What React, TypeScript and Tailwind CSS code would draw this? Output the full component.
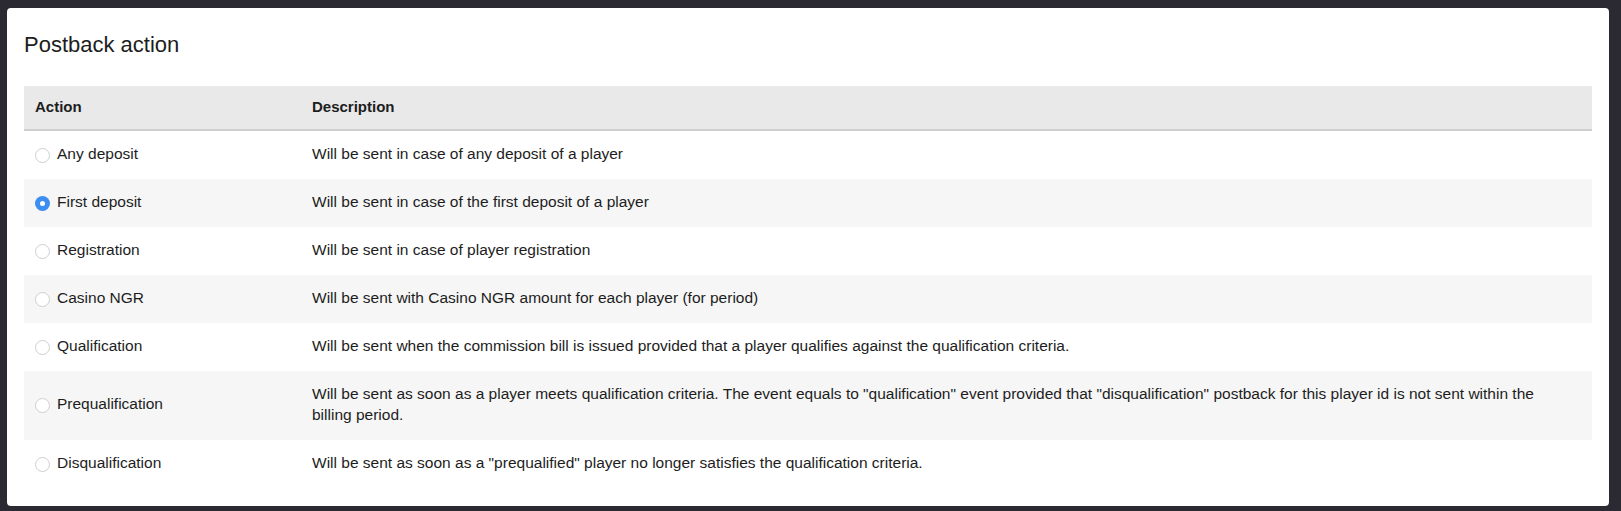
import React from "react";

const rows = [
  { action: "Any deposit", desc: "Will be sent in case of any deposit of a player", checked: false },
  { action: "First deposit", desc: "Will be sent in case of the first deposit of a player", checked: true },
  { action: "Registration", desc: "Will be sent in case of player registration", checked: false },
  { action: "Casino NGR", desc: "Will be sent with Casino NGR amount for each player (for period)", checked: false },
  { action: "Qualification", desc: "Will be sent when the commission bill is issued provided that a player qualifies against the qualification criteria.", checked: false },
  {
    action: "Prequalification",
    desc: (
      <>
        Will be sent as soon as a player meets qualification criteria. The event equals to "qualification" event provided that "disqualification" postback for this player id is not sent within the
        <br />
        billing period.
      </>
    ),
    checked: false,
  },
  { action: "Disqualification", desc: 'Will be sent as soon as a "prequalified" player no longer satisfies the qualification criteria.', checked: false },
];

function Radio({ checked }: { checked: boolean }) {
  if (checked) {
    return (
      <span className="flex h-[15px] w-[15px] shrink-0 items-center justify-center rounded-full bg-[#3d8ef2]">
        <span className="h-[5px] w-[5px] rounded-full bg-white" />
      </span>
    );
  }
  return <span className="h-[15px] w-[15px] shrink-0 rounded-full border border-[#cfcfcf] bg-white" />;
}

export default function App() {
  return (
    <div
      className="min-h-[511px] bg-[#2b2a33] pt-[8px] pl-[7px] pr-[12px] pb-[6px] text-[#1d1d1d]"
      style={{ fontFamily: '"Liberation Sans", Arial, sans-serif' }}
    >
      <div className="rounded-[4px] bg-white px-[17px] pt-[23px] pb-[18px]">
        <h1 className="h-[28px] text-[22px] leading-[28px] font-normal">Postback action</h1>
        <div className="mt-[27px]">
          <div className="flex h-[45px] items-center border-b-2 border-[#cfcfcf] bg-[#e9e9e9] pb-[1px] text-[15px] font-bold">
            <div className="w-[277px] shrink-0 pl-[11px]">Action</div>
            <div className="pl-[11px]">Description</div>
          </div>
          {rows.map((r, i) => (
            <div
              key={i}
              className={`flex items-center text-[15.5px] leading-[21px] ${i % 2 === 1 ? "bg-[#f6f6f6]" : "bg-white"}`}
            >
              <div className="flex w-[277px] shrink-0 items-center gap-[7px] pl-[11px]">
                <Radio checked={r.checked} />
                <span className="pb-[4px]">{r.action}</span>
              </div>
              <div className="pt-[12px] pb-[15px] pl-[11px] pr-[8px]">{r.desc}</div>
            </div>
          ))}
        </div>
      </div>
    </div>
  );
}
